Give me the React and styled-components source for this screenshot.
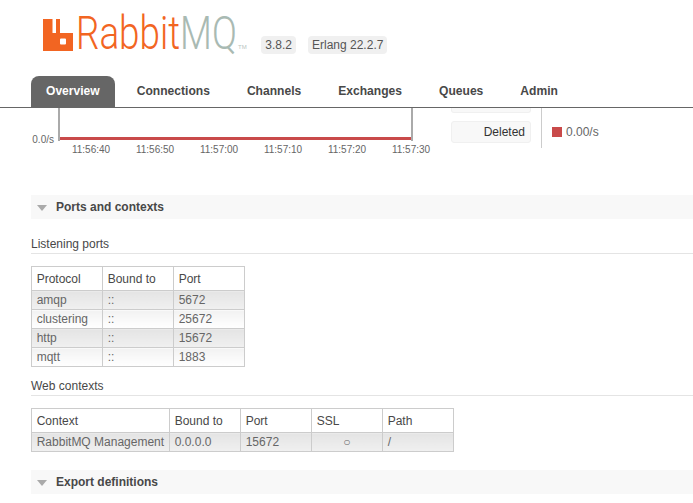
import React from 'react';
import styled, { createGlobalStyle } from 'styled-components';

const GlobalStyle = createGlobalStyle`
  html, body {
    margin: 0;
    height: 100%;
    overflow: hidden;
    background: #fff;
    font-family: "Liberation Sans", Arial, sans-serif;
    font-size: 12px;
    color: #484848;
  }
`;

const Page = styled.div`
  width: 693px;
  height: 503px;
  overflow: hidden;
`;

const Header = styled.header`
  display: flex;
  height: 76px;
  box-sizing: border-box;
  padding: 18px 0 0 43px;
`;

const LogoMark = styled.svg`
  width: 30px;
  height: 33px;
  flex: none;
`;

const LogoText = styled.div`
  width: 170px;
  height: 33px;
  margin-left: 3px;
  font-family: Roboto, sans-serif;
  font-weight: 300;
  font-size: 46px;
  line-height: 31px;
  white-space: nowrap;
  color: #f26522;
  transform: scaleX(0.8);
  transform-origin: left top;
  span { color: #a9bab3; }
`;

const Tm = styled.span`
  position: absolute;
  left: 238px;
  top: 44px;
  font-size: 6px;
  color: #b9c6c1;
`;

const Versions = styled.div`
  display: flex;
  gap: 12px;
  margin: 18px 0 0 15.3px;
`;

const Version = styled.span`
  height: 18px;
  padding: 0 4px;
  line-height: 18px;
  background: #f0f0f0;
  border-radius: 4px;
  color: #555;
  font-size: 12px;
`;

const Tabs = styled.nav`
  display: flex;
  gap: 7px;
  height: 32px;
  box-sizing: border-box;
  padding-left: 31px;
  border-bottom: 1px solid #666;
`;

const Tab = styled.a`
  height: 31px;
  padding: 0 15px;
  line-height: 31px;
  font-weight: bold;
  font-size: 12.08px;
  color: ${p => (p.$active ? '#fff' : '#484848')};
  background: ${p => (p.$active ? '#666' : 'transparent')};
  border-radius: 8px 8px 0 0;
`;

const ChartRow = styled.section`
  display: flex;
  height: 87px;
  padding-left: 31px;
`;

const Chart = styled.div`
  width: 420px;
  flex: none;
`;

const PlotRow = styled.div`
  display: flex;
  align-items: flex-end;
`;

const YLabel = styled.span`
  width: 23px;
  margin: 0 4px -5px 0;
  font-size: 10px;
  line-height: 12px;
  text-align: right;
  color: #666;
`;

const Plot = styled.div`
  display: flex;
  align-items: flex-end;
  width: 351px;
  height: 33px;
  box-sizing: content-box;
  border: solid #aaa;
  border-width: 0 2px;
`;

const Series = styled.div`
  width: 100%;
  height: 3px;
  margin-bottom: 1px;
  background: #c94a4a;
`;

const Ticks = styled.div`
  display: grid;
  grid-template-columns: repeat(6, 64px);
  margin: 3px 0 0 28px;
  font-size: 10px;
  line-height: 12px;
  text-align: center;
  color: #666;
`;

const Legend = styled.div`
  width: 90px;
  height: 40px;
  flex: none;
  box-sizing: border-box;
  padding-top: 13px;
`;

const LegendBox = styled.div`
  position: relative;
  width: 80px;
  height: 22px;
  box-sizing: border-box;
  padding-right: 5px;
  line-height: 20px;
  text-align: right;
  color: #333;
  background: #f8f8f8;
  border: 1px solid #f0f0f0;
  border-radius: 3px;
`;

const ClippedBox = styled.div`
  position: absolute;
  left: -1px;
  top: -14px;
  width: 80px;
  height: 5px;
  box-sizing: border-box;
  border: 1px solid #f0f0f0;
  border-top: 0;
  border-radius: 0 0 3px 3px;
  background: #f8f8f8;
`;

const Rate = styled.div`
  display: flex;
  align-items: center;
  gap: 4px;
  height: 40px;
  box-sizing: border-box;
  padding: 7px 0 0 10px;
  border-left: 1px solid #ccc;
  color: #666;
`;

const Swatch = styled.i`
  width: 10px;
  height: 10px;
  background: #c94a4a;
`;

const SectionBar = styled.h2`
  display: flex;
  align-items: center;
  gap: 9px;
  height: 24px;
  margin: 0 0 0 31px;
  padding-left: 6px;
  background: #f8f8f8;
  font-size: 12px;
  font-weight: bold;
  color: #484848;
`;

const Arrow = styled.i`
  flex: none;
  width: 0;
  height: 0;
  margin-top: 2px;
  border: solid transparent;
  border-width: 6px 5.5px 0;
  border-top-color: #aaa;
`;

const Spacer = styled.div`
  height: ${p => p.$h}px;
`;

const SubTitle = styled.h3`
  height: 18px;
  box-sizing: border-box;
  margin: 0 0 12px 31px;
  font-size: 12px;
  font-weight: normal;
  line-height: 17px;
  color: #484848;
  border-bottom: 1px solid #e4e4e4;
`;

const Table = styled.table`
  margin-left: 31px;
  border-collapse: collapse;
  font-size: 12px;
  table-layout: fixed;
  width: ${p => p.$width}px;
`;

const Th = styled.th`
  height: 24px;
  box-sizing: border-box;
  padding: 0 5px 0 4.7px;
  border: 1px solid #ccc;
  font-weight: normal;
  text-align: left;
  color: #484848;
`;

const Td = styled.td`
  height: 19px;
  box-sizing: border-box;
  padding: 0 5px 0 4.7px;
  border: 1px solid #ccc;
  color: #666;
  white-space: nowrap;
  text-align: ${p => (p.$center ? 'center' : 'left')};
  line-height: 14px;
  background: ${p => (p.$odd
    ? 'linear-gradient(#e4e4e4, #f0f0f0)'
    : 'linear-gradient(#f2f2f2, #fff)')};
`;

const FirstCol = styled.col`
  width: 138px;
`;

const ports = [
  ['amqp', '::', '5672'],
  ['clustering', '::', '25672'],
  ['http', '::', '15672'],
  ['mqtt', '::', '1883'],
];

const times = ['11:56:40', '11:56:50', '11:57:00', '11:57:10', '11:57:20', '11:57:30'];
const tabs = ['Overview', 'Connections', 'Channels', 'Exchanges', 'Queues', 'Admin'];

const App = () => (
  <Page>
    <GlobalStyle />
    <Header>
      <LogoMark viewBox="0 0 30 33">
        <path
          fill="#f26522"
          fillRule="evenodd"
          d="M0 1h9.5v14H13V1h4v14h13v18H0z M18 20.5a1 1 0 0 0-1 1v4a1 1 0 0 0 1 1h4a1 1 0 0 0 1-1v-4a1 1 0 0 0-1-1z"
        />
      </LogoMark>
      <LogoText>Rabbit<span>MQ</span></LogoText>
      <Tm>TM</Tm>
      <Versions>
        <Version>3.8.2</Version>
        <Version>Erlang 22.2.7</Version>
      </Versions>
    </Header>
    <Tabs>
      {tabs.map((t, i) => <Tab key={t} $active={i === 0}>{t}</Tab>)}
    </Tabs>
    <ChartRow>
      <Chart>
        <PlotRow>
          <YLabel>0.0/s</YLabel>
          <Plot><Series /></Plot>
        </PlotRow>
        <Ticks>
          {times.map(t => <span key={t}>{t}</span>)}
        </Ticks>
      </Chart>
      <Legend>
        <LegendBox>
          <ClippedBox />
          Deleted
        </LegendBox>
      </Legend>
      <Rate><Swatch />0.00/s</Rate>
    </ChartRow>
    <SectionBar><Arrow />Ports and contexts</SectionBar>
    <Spacer $h={17} />
    <SubTitle>Listening ports</SubTitle>
    <Table $width={214}>
      <thead>
        <tr><Th>Protocol</Th><Th>Bound to</Th><Th>Port</Th></tr>
      </thead>
      <tbody>
        {ports.map((r, i) => (
          <tr key={r[0]}>
            {r.map((c, j) => <Td key={j} $odd={i % 2 === 0}>{c}</Td>)}
          </tr>
        ))}
      </tbody>
    </Table>
    <Spacer $h={11} />
    <SubTitle>Web contexts</SubTitle>
    <Table $width={423}>
      <colgroup>
        <FirstCol /><col /><col /><col /><col />
      </colgroup>
      <thead>
        <tr><Th>Context</Th><Th>Bound to</Th><Th>Port</Th><Th>SSL</Th><Th>Path</Th></tr>
      </thead>
      <tbody>
        <tr>
          <Td $odd>RabbitMQ Management</Td>
          <Td $odd>0.0.0.0</Td>
          <Td $odd>15672</Td>
          <Td $odd $center>○</Td>
          <Td $odd>/</Td>
        </tr>
      </tbody>
    </Table>
    <Spacer $h={18} />
    <SectionBar><Arrow />Export definitions</SectionBar>
  </Page>
);

export default App;
